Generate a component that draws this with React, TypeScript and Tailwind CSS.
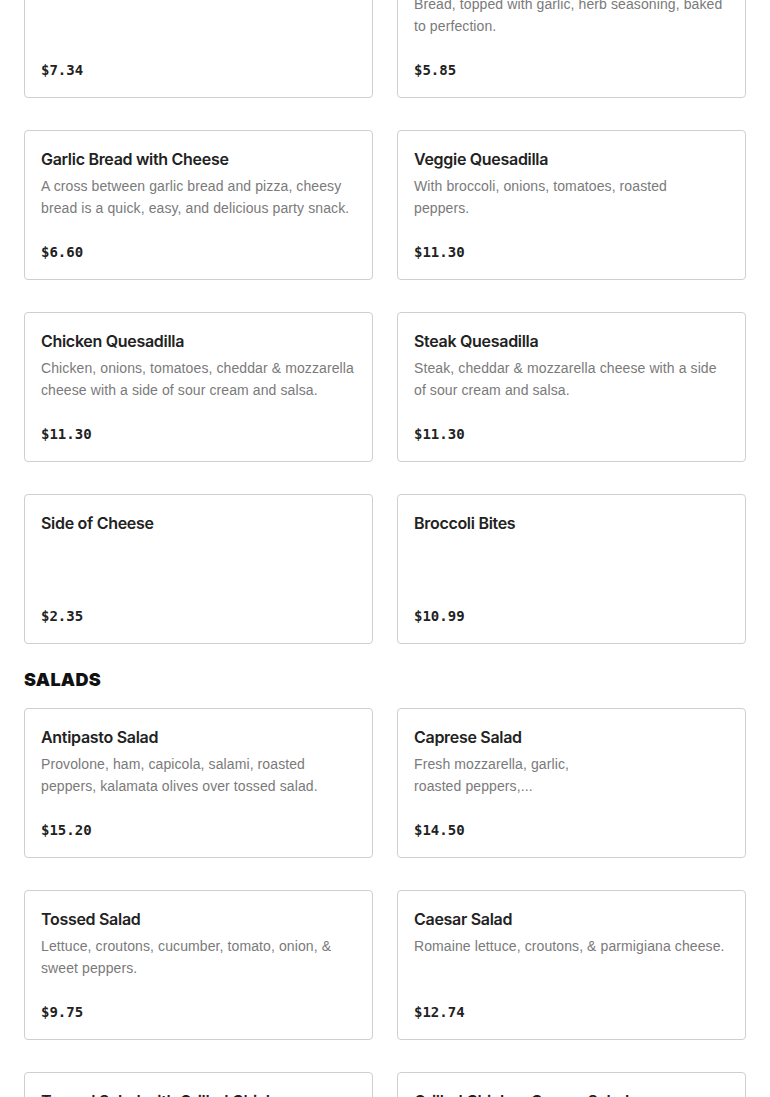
type Item = { name: string; description?: string; price: string };

const appetizers: Item[] = [
  { name: "Garlic Bread", price: "$7.34" },
  {
    name: "Garlic Knots",
    description: "Bread, topped with garlic, herb seasoning, baked to perfection.",
    price: "$5.85",
  },
  {
    name: "Garlic Bread with Cheese",
    description: "A cross between garlic bread and pizza, cheesy bread is a quick, easy, and delicious party snack.",
    price: "$6.60",
  },
  {
    name: "Veggie Quesadilla",
    description: "With broccoli, onions, tomatoes, roasted\npeppers.",
    price: "$11.30",
  },
  {
    name: "Chicken Quesadilla",
    description: "Chicken, onions, tomatoes, cheddar & mozzarella cheese with a side of sour cream and salsa.",
    price: "$11.30",
  },
  {
    name: "Steak Quesadilla",
    description: "Steak, cheddar & mozzarella cheese with a side of sour cream and salsa.",
    price: "$11.30",
  },
  { name: "Side of Cheese", price: "$2.35" },
  { name: "Broccoli Bites", price: "$10.99" },
];

const salads: Item[] = [
  {
    name: "Antipasto Salad",
    description: "Provolone, ham, capicola, salami, roasted peppers, kalamata olives over tossed salad.",
    price: "$15.20",
  },
  {
    name: "Caprese Salad",
    description: "Fresh mozzarella, garlic,\nroasted peppers,...",
    price: "$14.50",
  },
  {
    name: "Tossed Salad",
    description: "Lettuce, croutons, cucumber, tomato, onion, & sweet peppers.",
    price: "$9.75",
  },
  {
    name: "Caesar Salad",
    description: "Romaine lettuce, croutons, & parmigiana cheese.",
    price: "$12.74",
  },
  {
    name: "Tossed Salad with Grilled Chicken",
    description: "Lettuce, croutons, cucumber, tomato, onion, sweet peppers & grilled chicken.",
    price: "$13.50",
  },
  {
    name: "Grilled Chicken Caesar Salad",
    description: "Romaine lettuce, croutons, parmigiana cheese & grilled chicken.",
    price: "$14.25",
  },
];

function MenuCard({ item }: { item: Item }) {
  return (
    <div className="flex h-[150px] flex-col rounded-[4px] border border-[#cfcfcf] bg-white px-4 py-4">
      <h3 className="text-[16px] font-semibold leading-6 text-[#222222] font-['Inter',sans-serif] tracking-[-0.3px]">
        {item.name}
      </h3>
      {item.description && (
        <p className="mt-1 whitespace-pre-line text-[14px] leading-[22px] text-[#7a7a7a] font-['Liberation_Sans',sans-serif] tracking-[0.1px]">
          {item.description}
        </p>
      )}
      <div className="mt-auto text-[14px] font-bold leading-[22px] text-[#222222] font-['DejaVu_Sans_Mono',monospace]">
        {item.price}
      </div>
    </div>
  );
}

export default function App() {
  return (
    <div className="h-[1097px] overflow-hidden bg-white">
      <div className="-mt-[52px] px-6">
        <div className="grid grid-cols-2 gap-x-6 gap-y-8">
          {appetizers.map((item) => (
            <MenuCard key={item.name} item={item} />
          ))}
        </div>

        <h2 className="mt-6 mb-4 text-[18px] font-black uppercase leading-6 tracking-[0.3px] text-[#111111] font-['Inter',sans-serif]">
          Salads
        </h2>

        <div className="grid grid-cols-2 gap-x-6 gap-y-8">
          {salads.map((item) => (
            <MenuCard key={item.name} item={item} />
          ))}
        </div>
      </div>
    </div>
  );
}
